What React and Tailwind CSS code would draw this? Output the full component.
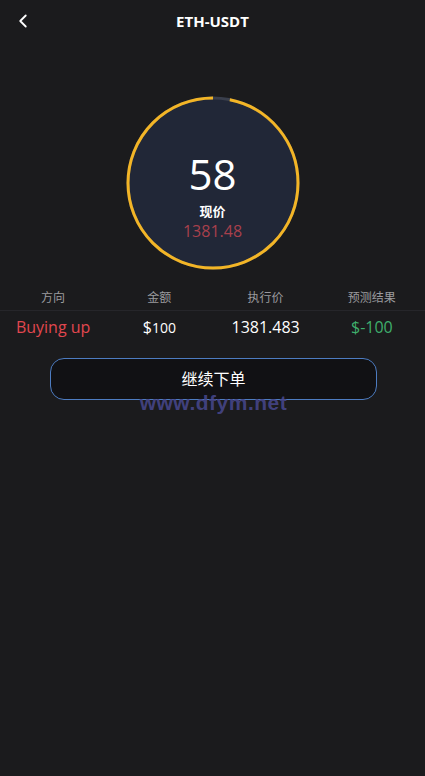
import { ChevronLeft } from 'lucide-react'

const R = 85
const C = 2 * Math.PI * R

function Countdown({ value, total }) {
  const left = value / total
  return (
    <div className="relative w-[176px] h-[176px]">
      <svg width="176" height="176" viewBox="0 0 176 176" className="absolute inset-0">
        <circle cx="88" cy="88" r={R} fill="#212737" stroke="#3a3f4c" strokeWidth="3" />
        <circle
          cx="88" cy="88" r={R} fill="none" stroke="#f3b526" strokeWidth="3"
          strokeDasharray={`${C * left} ${C}`}
          transform="rotate(-90 88 88) scale(1 -1) translate(0 -176)"
        />
      </svg>
      <div className="relative flex flex-col items-center pt-[55px]">
        <p className="text-white text-[42px] leading-[48px]">{value}</p>
        <p className="text-white text-[13px] font-bold mt-[4px] leading-[18px]">现价</p>
        <p className="text-[#a8404c] text-[16px] leading-[22px]">1381.48</p>
      </div>
    </div>
  )
}

export default function App() {
  return (
    <div
      className="w-[425px] h-[776px] bg-[#1b1b1d] overflow-hidden"
      style={{ fontFamily: '"Open Sans", "Noto Sans CJK SC", sans-serif' }}
    >
      <div className="relative h-[42px] flex items-center justify-center">
        <ChevronLeft className="absolute left-[12px] top-[10px] text-white" size={22} strokeWidth={2} />
        <h1 className="text-white text-[15px] font-bold">ETH-USDT</h1>
      </div>

      <div className="flex justify-center mt-[53px]">
        <Countdown value={58} total={60} />
      </div>

      <div className="mt-[18px]">
        <div className="grid grid-cols-4 text-center text-[12px] text-[#9a9a9e] leading-[18px] pb-[3px] border-b border-[#26262a]">
          <span>方向</span>
          <span>金额</span>
          <span>执行价</span>
          <span>预测结果</span>
        </div>
        <div className="grid grid-cols-4 text-center text-[16px] leading-[28px] pt-[2px]">
          <span className="text-[#e1474f]">Buying up</span>
          <span className="text-white">$<span className="text-[14px]">100</span></span>
          <span className="text-white">1381.483</span>
          <span className="text-[#3fae6c]">$-100</span>
        </div>
      </div>

      <div className="relative ml-[50px] mr-[48px] mt-[16px]">
        <button className="w-full h-[42px] rounded-[14px] border border-[#4d7cc1] bg-[#111114] text-white text-[16px]">
          继续下单
        </button>
        <p className="absolute left-0 right-0 top-[29px] text-center text-[21px] font-bold text-[#46468a]/90 tracking-[0.5px]"
          style={{ fontFamily: '"Liberation Sans", Arial, sans-serif' }}>
          www.dfym.net
        </p>
      </div>
    </div>
  )
}
